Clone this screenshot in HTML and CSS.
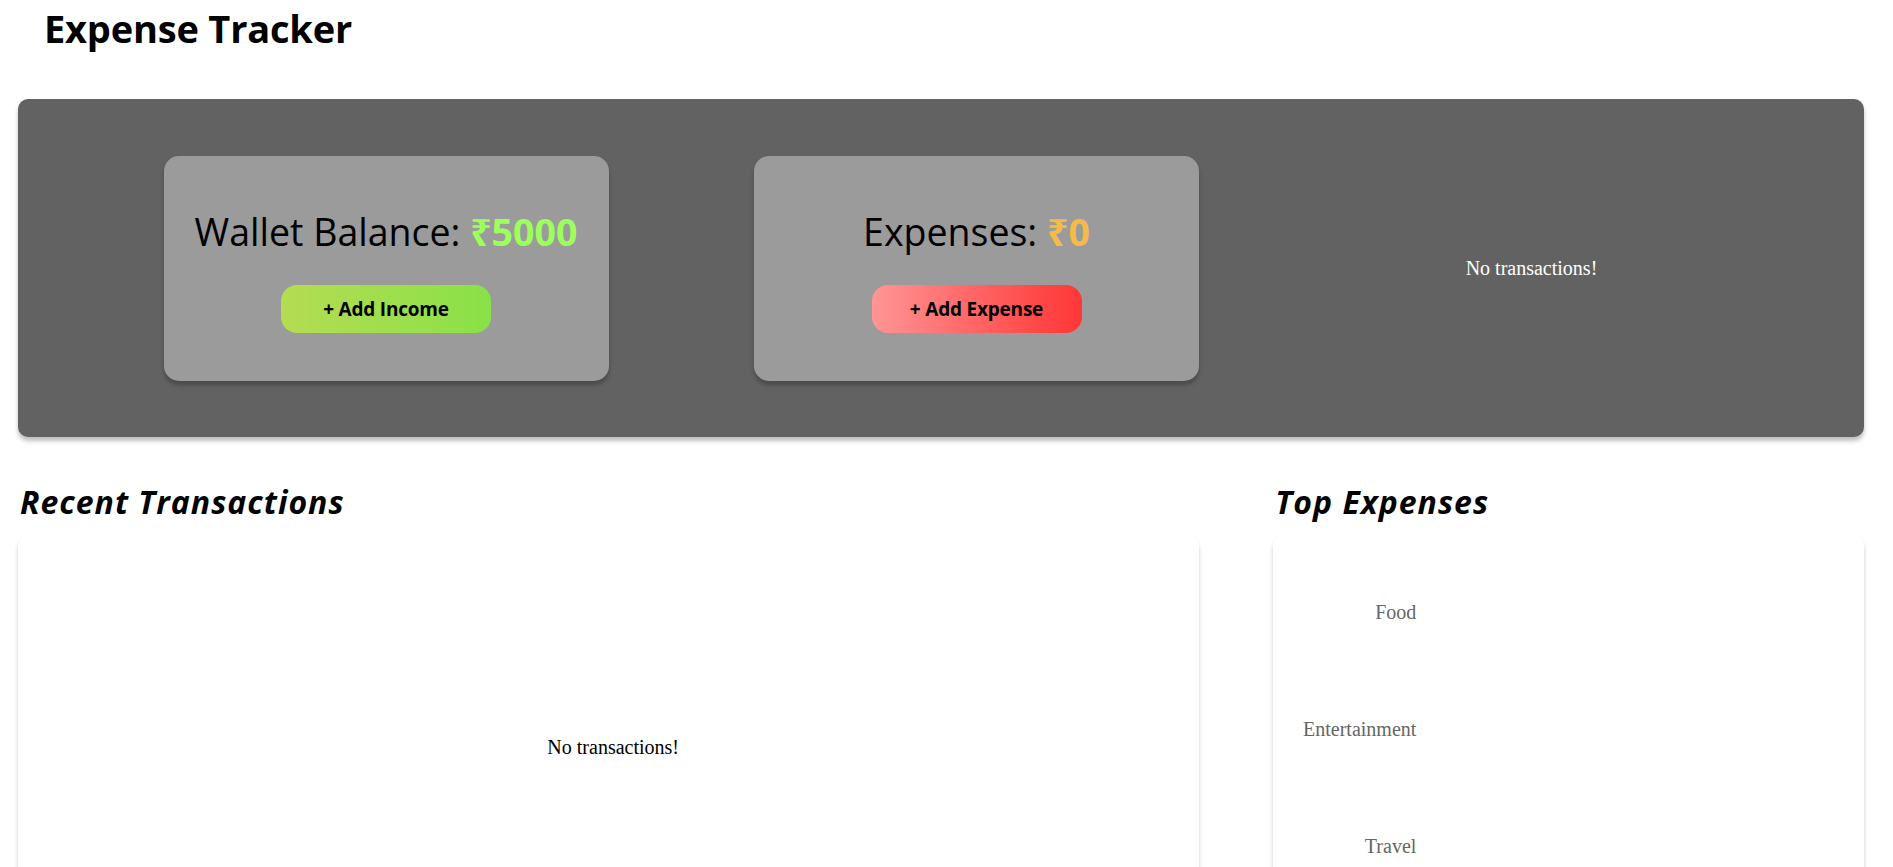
FILE: index.html
```html
<!DOCTYPE html>
<html lang="en">
<head>
<meta charset="utf-8">
<title>Expense Tracker</title>
<link rel="stylesheet" href="styles.css">
</head>
<body>
<div class="app">
  <h1 class="app-title">Expense Tracker</h1>
  <section class="summary">
    <div class="stat-card">
      <h2 class="stat-text">Wallet Balance: <span class="amount amount-income">₹5000</span></h2>
      <button class="action-btn btn-income">+ Add Income</button>
    </div>
    <div class="stat-card">
      <h2 class="stat-text">Expenses: <span class="amount amount-expense">₹0</span></h2>
      <button class="action-btn btn-expense">+ Add Expense</button>
    </div>
    <div class="summary-chart">
      <p class="empty-text">No transactions!</p>
    </div>
  </section>
  <section class="lower">
    <div class="lower-col">
      <h2 class="section-title">Recent Transactions</h2>
      <div class="panel-card recent-card">
        <p class="recent-empty">No transactions!</p>
      </div>
    </div>
    <div class="lower-col">
      <h2 class="section-title">Top Expenses</h2>
      <div class="panel-card top-card">
        <div class="bar-row"><span class="bar-label">Food</span></div>
        <div class="bar-row"><span class="bar-label">Entertainment</span></div>
        <div class="bar-row"><span class="bar-label">Travel</span></div>
      </div>
    </div>
  </section>
</div>
</body>
</html>
```

FILE: styles.css
```css
* { box-sizing: border-box; }
body {
  margin: 0;
  font-family: "Open Sans", "Noto Sans", sans-serif;
  background: #ffffff;
  color: #000;
}
.app { padding: 0 29px 0 18px; }
.app-title {
  margin: 0;
  padding-left: 26px;
  font-size: 38px;
  line-height: 56px;
  font-weight: 700;
  letter-spacing: -0.2px;
}
.summary {
  margin-top: 43px;
  height: 338px;
  background: #626262;
  border-radius: 10px;
  box-shadow: 0 4px 4px rgba(0,0,0,0.25);
  display: flex;
  align-items: center;
  justify-content: space-evenly;
}
.stat-card {
  width: 445px;
  background: #9b9b9b;
  border-radius: 15px;
  box-shadow: 0 4px 4px rgba(0,0,0,0.25);
  display: flex;
  flex-direction: column;
  align-items: center;
  padding: 54px 0 48px;
}
.stat-text {
  margin: 0 0 31px;
  font-size: 37.5px;
  line-height: 44px;
  font-weight: 400;
  white-space: nowrap;
}
.amount { font-weight: 700; }
.amount-income { color: #9dff5b; }
.amount-expense { color: #f4bb4a; }
.action-btn {
  width: 210px;
  height: 48px;
  border: 0;
  border-radius: 16px;
  font-family: "Open Sans", sans-serif;
  font-weight: 700;
  font-size: 19px;
  letter-spacing: -0.2px;
  color: #000;
}
.btn-income { background: linear-gradient(90deg, #b5dc52 0%, #89e148 100%); }
.btn-expense { background: linear-gradient(90deg, #ff9595 0%, #ff4747 80%, #ff3838 100%); }
.summary-chart {
  width: 374px;
  display: flex;
  justify-content: center;
}
.empty-text {
  margin: 0;
  font-family: "Liberation Serif", serif;
  font-size: 20px;
  color: #fff;
}
.lower {
  margin-top: 47px;
  display: grid;
  grid-template-columns: 2fr 1fr;
  column-gap: 74px;
}
.section-title {
  margin: 0 0 12px;
  font-size: 32px;
  line-height: 36px;
  font-weight: 700;
  font-style: italic;
  letter-spacing: 1px;
  padding-left: 2px;
}
.panel-card {
  background: #fff;
  border-radius: 15px;
  box-shadow: 0 4px 4px rgba(0,0,0,0.2);
}
.recent-card {
  height: 430px;
  display: flex;
  align-items: center;
  justify-content: center;
  padding-left: 9px;
}
.recent-empty {
  margin: 0;
  font-family: "Liberation Serif", serif;
  font-size: 20px;
}
.top-card { padding-top: 22px; height: 430px; }
.bar-row { height: 117px; display: flex; align-items: center; }
.bar-label {
  width: 143px;
  text-align: right;
  font-family: "Liberation Serif", serif;
  font-size: 20px;
  color: #666;
}
```
